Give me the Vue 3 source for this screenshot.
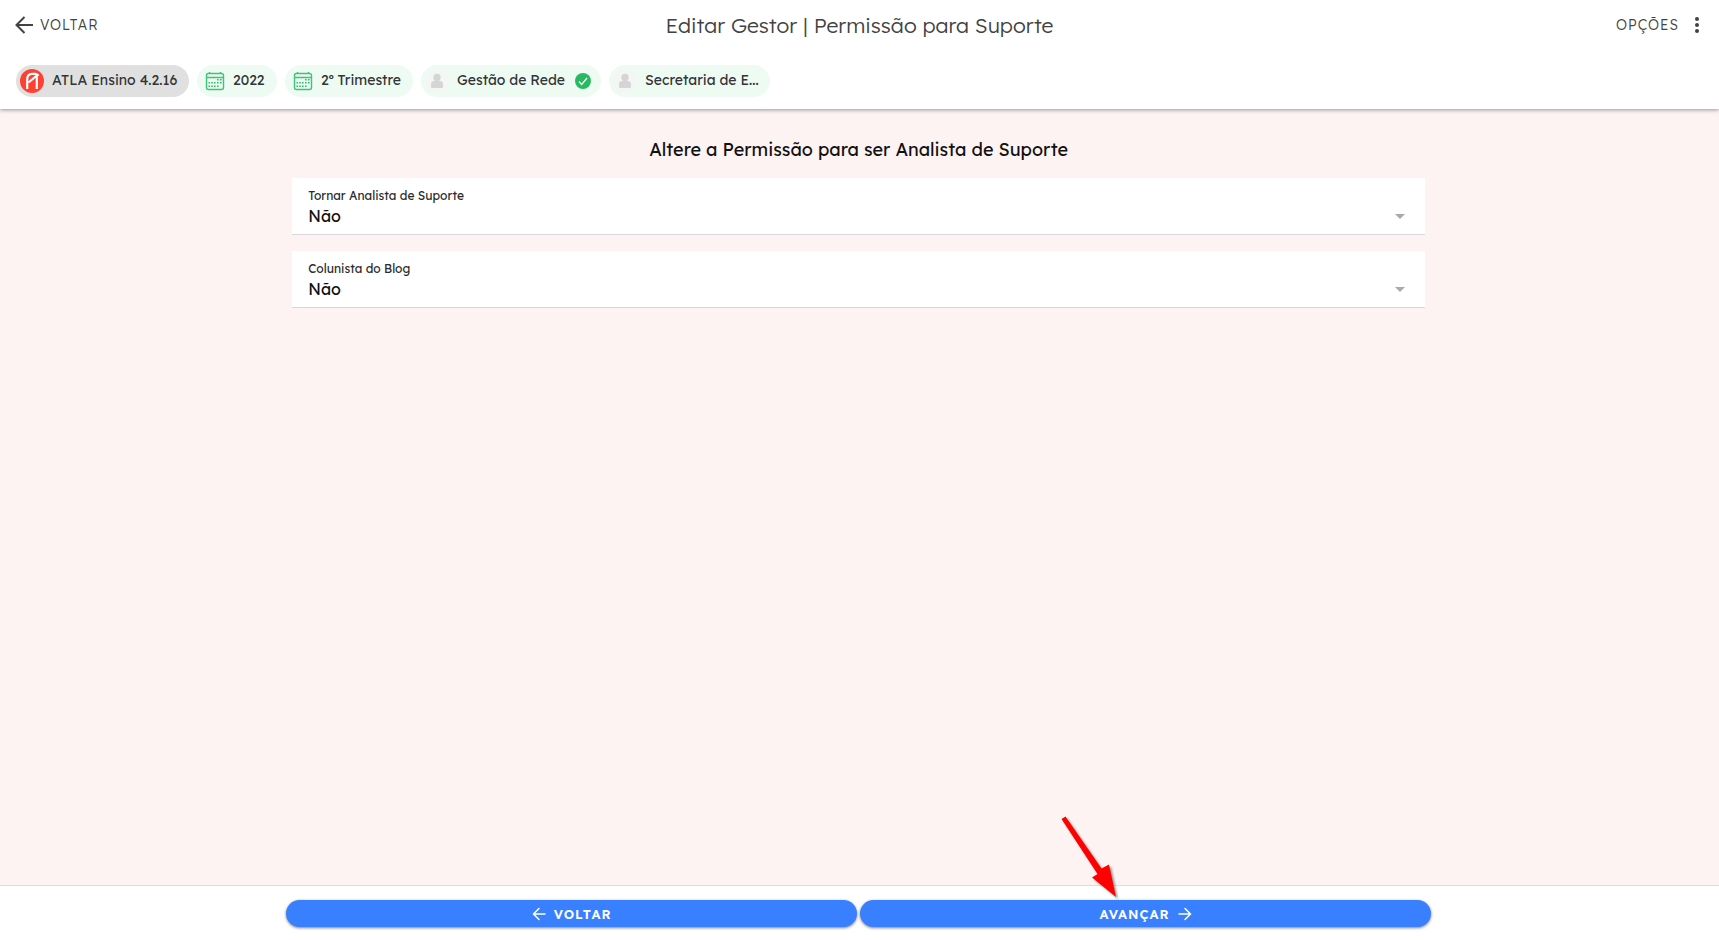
<script setup>
import { ref } from 'vue'

const support = ref('Não')
const columnist = ref('Não')

const chips = [
  { label: 'ATLA Ensino 4.2.16', icon: 'logo', kind: 'version' },
  { label: '2022', icon: 'calendar', kind: 'year' },
  { label: '2º Trimestre', icon: 'calendar', kind: 'term' },
  { label: 'Gestão de Rede', icon: 'person', kind: 'role', checked: true },
  { label: 'Secretaria de E...', icon: 'person', kind: 'unit' }
]
</script>

<template>
  <div class="page">
    <header class="header">
      <div class="toolbar">
        <button type="button" class="tool back">
          <svg width="18" height="18" viewBox="0 0 18 18" aria-hidden="true">
            <path d="M9.5 1L1.5 9l8 8M2 9h16" fill="none" stroke="currentColor" stroke-width="2" />
          </svg>
          <span>VOLTAR</span>
        </button>
        <h1>Editar Gestor | Permissão para Suporte</h1>
        <button type="button" class="tool options">
          <span>OPÇÕES</span>
          <svg width="4" height="18" viewBox="0 0 4 18" aria-hidden="true">
            <circle cx="2" cy="3" r="2" /><circle cx="2" cy="9" r="2" /><circle cx="2" cy="15" r="2" />
          </svg>
        </button>
      </div>
      <div class="chips">
        <button v-for="chip in chips" :key="chip.label" type="button" class="chip" :class="chip.kind">
          <svg v-if="chip.icon === 'logo'" class="avatar" viewBox="0 0 24 24" aria-hidden="true">
            <circle cx="12" cy="12" r="12" fill="#ff4131" />
            <path d="M7.200 20v-9.500C7.200 6.500 9 4.800 12 4.800h3c2 0 2.500.7 3.500 2M16.800 20V7.500M8.500 13.500L17.500 6" fill="none" stroke="#fff" stroke-width="2.200" />
          </svg>
          <svg v-else-if="chip.icon === 'calendar'" class="avatar" viewBox="0 0 24 24" aria-hidden="true">
            <g fill="none" stroke="#3ec477" stroke-width="1.400">
              <rect x="3.500" y="4.500" width="17" height="16" rx="2" />
              <path d="M3.500 8.500h17M6.500 3v2M17.500 3v2" />
            </g>
            <g fill="#2fbf6b">
              <path d="M14 10h1.600v1.600H14zM17 10h1.600v1.600H17zM11 13h1.600v1.600H11zM14 13h1.600v1.600H14zM17 13h1.600v1.600H17zM5.500 13h1.600v1.600H5.500zM8.200 13h1.600v1.600H8.200zM5.500 16.500h1.600v1.600H5.500zM8.200 16.500h1.600v1.600H8.200zM11 16.500h1.600v1.600H11zM14 16.500h1.600v1.600H14z" />
            </g>
          </svg>
          <svg v-else class="avatar" viewBox="0 0 24 24" aria-hidden="true">
            <circle cx="12" cy="12" r="12" fill="#f4f6f5" />
            <circle cx="12" cy="8.500" r="3.700" fill="#d4d5d4" />
            <path d="M6 18v-2.500c0-2 1-3.500 3-3.500h6c2 0 3 1.500 3 3.500V18q0 1-1 1H7q-1 0-1-1z" fill="#d4d5d4" />
          </svg>
          <span class="chip-label">{{ chip.label }}</span>
          <svg v-if="chip.checked" class="check" viewBox="0 0 16 16" aria-hidden="true">
            <circle cx="8" cy="8" r="8" fill="#28ba62" />
            <path d="M4 8.500l2.700 3L12 5" fill="none" stroke="#fff" stroke-width="1.200" />
          </svg>
        </button>
      </div>
    </header>

    <main class="content">
      <div class="column form">
        <h2>Altere a Permissão para ser Analista de Suporte</h2>
        <div class="field">
          <label for="support">Tornar Analista de Suporte</label>
          <select id="support" v-model="support">
            <option>Não</option>
            <option>Sim</option>
          </select>
        </div>
        <div class="field">
          <label for="columnist">Colunista do Blog</label>
          <select id="columnist" v-model="columnist">
            <option>Não</option>
            <option>Sim</option>
          </select>
        </div>
      </div>
    </main>

    <footer class="footer">
      <div class="column actions">
        <div class="action">
          <button type="button">
            <svg width="14" height="14" viewBox="0 0 14 14" aria-hidden="true">
              <path d="M7 1.500L1.500 7 7 12.500M2 7h11" fill="none" stroke="currentColor" stroke-width="1.500" stroke-linecap="round" />
            </svg>
            <span>VOLTAR</span>
          </button>
        </div>
        <div class="action">
          <button type="button">
            <span>AVANÇAR</span>
            <svg width="14" height="14" viewBox="0 0 14 14" aria-hidden="true">
              <path d="M7 1.500L12.500 7 7 12.500M12 7H1" fill="none" stroke="currentColor" stroke-width="1.500" stroke-linecap="round" />
            </svg>
          </button>
          <svg class="pointer" width="64" height="92" viewBox="0 0 64 92" aria-hidden="true">
            <path d="M5.500 5L9.500 2.500 45.500 54.500l7.500-4L60 83 36 63.500l5.500-3.500z" fill="#f00" />
          </svg>
        </div>
      </div>
    </footer>
  </div>
</template>

<style>
body {
  margin: 0;
}
</style>

<style scoped>
.page {
  display: flex;
  flex-direction: column;
  min-height: 100vh;
  background: #fdf3f2;
  color: #111;
  font-family: Lexend, "Open Sans", "Noto Sans", sans-serif;
  font-weight: 400;
}
*,
*::before,
*::after {
  box-sizing: border-box;
}
button {
  padding: 0;
  border: 0;
  background: none;
  color: inherit;
  font-family: inherit;
  font-weight: inherit;
  cursor: pointer;
}
.header {
  position: relative;
  background: #fff;
  padding-bottom: 12px;
  box-shadow: 0 1px 4px rgba(0, 0, 0, 0.4);
}
.toolbar {
  display: grid;
  grid-template-columns: 1fr auto 1fr;
  align-items: center;
  height: 50px;
  padding: 0 15px;
  color: #424242;
}
.tool {
  display: flex;
  align-items: center;
  font-size: 14px;
  font-weight: 300;
  letter-spacing: 1px;
}
.back {
  justify-self: start;
  gap: 7px;
}
.options {
  justify-self: end;
  gap: 16px;
  padding-right: 5px;
}
.options svg {
  fill: currentColor;
}
h1 {
  margin: 0;
  font-size: 21px;
  line-height: 28px;
  font-weight: 300;
}
.chips {
  display: flex;
  flex-wrap: wrap;
  gap: 8px;
  padding: 15px 16px 0;
}
.chip {
  display: flex;
  align-items: center;
  height: 32px;
  padding: 0 10px 0 4px;
  border-radius: 16px;
  background: #eefbf3;
  color: #323438;
  font-size: 14px;
  line-height: 20px;
  white-space: nowrap;
}
.chip-label {
  padding-bottom: 2px;
}
.version {
  min-width: 173px;
  background: #e0e0e0;
}
.year {
  min-width: 80px;
}
.term {
  min-width: 128px;
}
.role {
  min-width: 180px;
}
.unit {
  min-width: 161px;
}
.avatar {
  flex: none;
  width: 24px;
  height: 24px;
  margin-right: 8px;
}
.year .avatar,
.term .avatar {
  margin: 0 6px 0 2px;
}
.check {
  width: 16px;
  height: 16px;
  margin-left: auto;
}
.content {
  flex: 1;
}
.column {
  width: 66.6%;
  margin: 0 auto 0 16.65%;
}
.form {
  display: flex;
  flex-direction: column;
  gap: 16px;
  padding: 28px 6px 16px;
}
h2 {
  margin: 0;
  font-size: 18px;
  line-height: 25px;
  font-weight: 400;
  text-align: center;
  color: #111;
}
.field {
  position: relative;
  display: flex;
  flex-direction: column;
  height: 57px;
  padding: 10px 16px 6px;
  border-bottom: 1px solid #d8d8dc;
  background: #fff;
}
.field label {
  font-size: 12px;
  line-height: 16px;
  color: #2a2a2a;
}
.field select {
  width: 100%;
  height: 24px;
  padding: 0;
  border: 0;
  appearance: none;
  background: transparent;
  color: #111;
  font-family: inherit;
  font-weight: inherit;
  font-size: 16px;
  line-height: 24px;
}
.field::after {
  content: "";
  position: absolute;
  right: 20px;
  top: 36px;
  border: 5px solid transparent;
  border-top-color: #aaa;
  border-bottom: 0;
  pointer-events: none;
}
.footer {
  padding: 14px 0 13px;
  border-top: 1px solid #e4dada;
  background: #fff;
}
.actions {
  display: flex;
  gap: 3px;
}
.action {
  position: relative;
  flex: 1;
}
.action button {
  display: flex;
  align-items: center;
  justify-content: center;
  gap: 8px;
  width: 100%;
  height: 27px;
  border-radius: 14px;
  background: #3880ff;
  color: #fff;
  font-size: 13px;
  font-weight: 600;
  letter-spacing: 1px;
  box-shadow: 0 1px 3px rgba(0, 0, 0, 0.5);
}
.pointer {
  position: absolute;
  left: calc(50% - 90px);
  bottom: 21px;
  filter: drop-shadow(2px 2px 1px rgba(0, 0, 0, 0.4));
  pointer-events: none;
}
</style>
